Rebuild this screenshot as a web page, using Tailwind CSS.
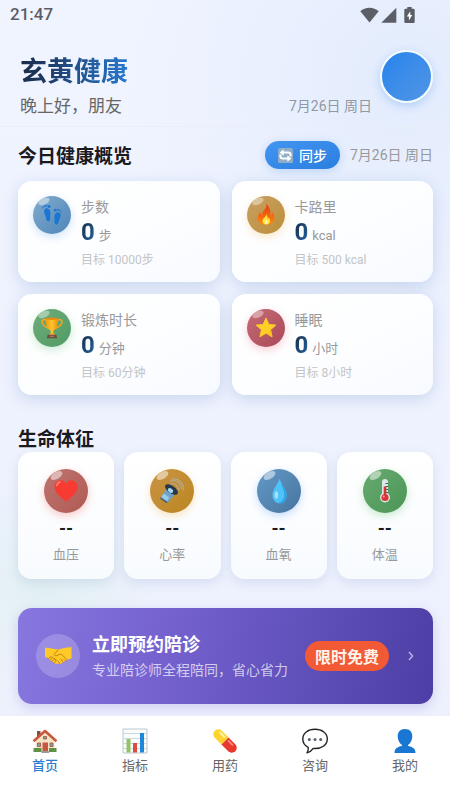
<!DOCTYPE html>
<html lang="zh-CN">
<head>
<meta charset="UTF-8">
<meta name="viewport" content="width=device-width, initial-scale=1">
<title>玄黄健康</title>
<script src="https://cdn.jsdelivr.net/npm/@tailwindcss/browser@4"></script>
</head>
<body class="min-h-screen flex flex-col font-['Roboto','Noto_Sans_CJK_SC',sans-serif] text-[#999999] bg-[#eef2fd] bg-[radial-gradient(circle_at_90%_10%,#e3ecfd_0%,transparent_34%),radial-gradient(circle_at_10%_73%,#e2f0f2_0%,transparent_16%),linear-gradient(180deg,#f0f4ff_0%,#edf1fd_100%)]">

<!-- Shared gradients -->
<svg class="absolute size-0" aria-hidden="true">
  <defs>
    <linearGradient id="flameG" x1="0" y1="0" x2="0" y2="1"><stop offset="0" stop-color="#e53917"/><stop offset="1" stop-color="#ff8a0d"/></linearGradient>
    <linearGradient id="goldG" x1="0" y1="0" x2="1" y2="0"><stop offset="0" stop-color="#f59b12"/><stop offset=".5" stop-color="#ffc52e"/><stop offset="1" stop-color="#ec8d0a"/></linearGradient>
  </defs>
</svg>

<div class="flex h-[30px] items-center justify-between pl-[10px] pr-[35px] text-[17px] font-medium text-[#5b5e66]">
  <span>21:47</span>
  <div class="flex items-center gap-[2px]">
    <svg class="h-4 w-[19px]" viewBox="0 0 19 16" fill="#5b5e66"><path d="M9.500 15.500 .3 4.200C2.800 1.900 6 .7 9.500.7s6.700 1.200 9.200 3.500z"/></svg>
    <svg class="size-4" viewBox="0 0 16 16" fill="#5b5e66"><path d="M15.300.7v15H.3z"/></svg>
    <svg class="ml-[5px] h-4 w-[11px]" viewBox="0 0 11 16"><path fill="#5b5e66" d="M3.300 0h4.400v1.700H9.500q1.200 0 1.200 1.200v11.800q0 1.200-1.200 1.200h-8Q.3 15.900.3 14.700V2.900q0-1.200 1.200-1.200h1.800z"/><path fill="#fff" d="M6.300 4.200v3.900h2L4.900 13.600V9.500H2.800z"/></svg>
  </div>
</div>

<header class="flex items-start border-b border-[#e9eef9] pt-5 pr-[17px] pb-1 pl-5">
  <div class="flex-1">
    <h1 class="w-fit bg-linear-to-r from-[#192a49] to-[#2678cf] bg-clip-text font-['Noto_Sans_CJK_SC',sans-serif] text-[27px] leading-[40px] font-bold text-transparent">玄黄健康</h1>
    <p class="text-[17px] leading-[32px] text-[#666666]">晚上好，朋友</p>
  </div>
  <time class="mr-2 self-end text-[14px] leading-[32px] text-[#9297a2]">7月26日 周日</time>
  <button type="button" aria-label="个人资料" class="size-[53px] rounded-full border-2 border-[#f3fcff] bg-linear-to-br from-[#2584ec] to-[#5095e5] shadow-[0_3px_10px_rgba(60,140,240,0.3)]"></button>
</header>

<main class="pr-[17px] pb-3 pl-[18px]">
  <section>
    <div class="flex items-center pt-[14px] pb-3">
      <h2 class="flex-1 font-['Noto_Sans_CJK_SC',sans-serif] text-[19px] leading-[28px] font-bold text-[#1a1a1f]">今日健康概览</h2>
      <button type="button" class="mr-[10px] flex h-[28px] items-center gap-[6px] rounded-full bg-linear-to-br from-[#4295f0] to-[#2a7edf] px-[13px] font-['Noto_Sans_CJK_SC',sans-serif] text-[14px] font-medium text-white shadow-[0_2px_8px_rgba(50,130,230,0.25)]">
        <svg class="size-[15px]" viewBox="0 0 16 16"><rect width="16" height="16" rx="2" fill="#8eadc6"/><path d="M2.600 9V7.200Q2.600 4.800 5 4.800h6.500M13.400 7v1.800q0 2.400-2.400 2.400H4.500" fill="none" stroke="#fff" stroke-width="2.200" transform="matrix(-1 0 0 1 16 0)"/><path fill="#fff" d="M6 1.300v7L1.700 4.800zM10 7.700v7l4.300-3.500z"/></svg>
        <span>同步</span>
      </button>
      <time class="text-[14px]">7月26日 周日</time>
    </div>

    <div class="grid grid-cols-2 gap-3">
      <article class="flex gap-[10px] rounded-[14px] bg-linear-to-br from-white via-[#fdfeff] to-[#f7faff] px-[15px] pt-[15px] pb-[11px] shadow-[0_4px_16px_rgba(80,125,185,0.24)]">
        <div class="size-[38px] shrink-0 rounded-full bg-linear-to-br from-[#83abcc] to-[#4d86b9] shadow-[0_3px_8px_rgba(60,140,230,0.25)]">
          <svg class="size-full" viewBox="0 0 38 38"><ellipse cx="11" cy="5.500" rx="6" ry="3" transform="rotate(-25 11 5.500)" fill="#fff" opacity=".45"/><g fill="#1976d2"><path d="M11.500 13.500c2-2.300 5-1 5.800 2.200.6 2.500-.4 3.900-.1 6 .3 2.600-.7 3.700-2 3.600-2-.1-1.900-2.600-2.500-4.700-.7-2.600-2.500-4.900-1.200-7.100zM27 17.200c-2.200-2-5-.4-5.500 2.500-.4 2.300.5 3.400.1 5.100-.5 2.500.5 3.700 1.800 3.700 2 .1 2-2.400 2.700-4.200.8-2.400 2.500-4.800.9-7.100z"/><circle cx="16" cy="10.500" r="1.500"/><circle cx="13.300" cy="9.800" r="1"/><circle cx="11.300" cy="10.300" r=".9"/><circle cx="9.800" cy="11.700" r=".8"/><circle cx="22.200" cy="14.200" r="1.400"/><circle cx="24.800" cy="13.700" r="1"/><circle cx="26.700" cy="14.400" r=".8"/><circle cx="28.200" cy="15.800" r=".7"/></g></svg>
        </div>
        <div>
          <h3 class="text-[14px] leading-[23px]">步数</h3>
          <p class="flex items-baseline gap-1 text-[13px] leading-[26px]"><strong class="bg-linear-to-br from-[#172b42] to-[#2169ae] bg-clip-text text-[24px] font-bold text-transparent">0</strong>步</p>
          <p class="text-[12px] leading-[22px] text-[#c3c4c8]">目标 10000步</p>
        </div>
      </article>
      <article class="flex gap-[10px] rounded-[14px] bg-linear-to-br from-white via-[#fdfeff] to-[#f7faff] px-[15px] pt-[15px] pb-[11px] shadow-[0_4px_16px_rgba(80,125,185,0.24)]">
        <div class="size-[38px] shrink-0 rounded-full bg-linear-to-br from-[#c7a062] to-[#bd8f38] shadow-[0_3px_8px_rgba(240,160,40,0.25)]">
          <svg class="size-full" viewBox="0 0 38 38"><ellipse cx="11" cy="5.500" rx="6" ry="3" transform="rotate(-25 11 5.500)" fill="#fff" opacity=".4"/><path fill="url(#flameG)" d="M19 8c1.200 3-.7 4.600-2.600 7-1.200 1.500-1.600 3-1.300 4.500-1.100-.6-1.700-2-1.500-3.500-2 2-3.100 4.400-2.800 7 .4 3.300 3.700 5.700 8.200 5.700s8-2.200 8.300-6c.2-2.700-1.200-5-2.300-6.700.1 1.800-.3 3-1.400 3.900.4-5-1.200-9.500-4.600-11.900z"/><path fill="#ffe341" d="M19 18.500c.7 2-3.500 3.500-3.500 6.500 0 2 1.600 3.400 3.700 3.400 2.300 0 3.900-1.400 3.900-3.500 0-1.500-.8-2.500-1.400-3.400-.2.900-.5 1.400-1 1.700.2-2-.3-3.600-1.700-4.700z"/><path fill="#fff7b8" d="M19.200 23.500c-1.700 1.400-2 4.300 0 4.400 2.200 0 1.900-2.700 0-4.400z"/></svg>
        </div>
        <div>
          <h3 class="text-[14px] leading-[23px]">卡路里</h3>
          <p class="flex items-baseline gap-1 text-[13px] leading-[26px]"><strong class="bg-linear-to-br from-[#172b42] to-[#2169ae] bg-clip-text text-[24px] font-bold text-transparent">0</strong>kcal</p>
          <p class="text-[12px] leading-[22px] text-[#c3c4c8]">目标 500 kcal</p>
        </div>
      </article>
      <article class="flex gap-[10px] rounded-[14px] bg-linear-to-br from-white via-[#fdfeff] to-[#f7faff] px-[15px] pt-[15px] pb-[11px] shadow-[0_4px_16px_rgba(80,125,185,0.24)]">
        <div class="size-[38px] shrink-0 rounded-full bg-linear-to-br from-[#6fad7b] to-[#4f9b65] shadow-[0_3px_8px_rgba(60,180,90,0.25)]">
          <svg class="size-full" viewBox="0 0 38 38"><ellipse cx="11" cy="5.500" rx="6" ry="3" transform="rotate(-25 11 5.500)" fill="#fff" opacity=".4"/><g fill="none" stroke="#f5a51e" stroke-width="1.600"><path d="M13.500 11.500c-2-1.700-4.800-1-4.500 1.500.3 3.200 3.200 5 6.500 6.500M24.500 11.500c2-1.700 4.800-1 4.500 1.500-.3 3.200-3.200 5-6.500 6.500"/></g><path fill="url(#goldG)" d="M12.800 9.500h12.400c0 6-1 10.500-4.800 12v4h-2.800v-4c-3.800-1.500-4.800-6-4.800-12z"/><ellipse cx="19" cy="9.700" rx="6.200" ry="1.300" fill="#e58a10"/><path fill="#f0a020" d="M16.300 24.500h5.400v1.500h-5.400z"/><path fill="#6d4c41" d="M14.700 25.700h8.600l.9 3.500H13.800z"/><path fill="#a87c5a" d="M16.700 26.700h4.600v1.200h-4.600z"/></svg>
        </div>
        <div>
          <h3 class="text-[14px] leading-[23px]">锻炼时长</h3>
          <p class="flex items-baseline gap-1 text-[13px] leading-[26px]"><strong class="bg-linear-to-br from-[#172b42] to-[#2169ae] bg-clip-text text-[24px] font-bold text-transparent">0</strong>分钟</p>
          <p class="text-[12px] leading-[22px] text-[#c3c4c8]">目标 60分钟</p>
        </div>
      </article>
      <article class="flex gap-[10px] rounded-[14px] bg-linear-to-br from-white via-[#fdfeff] to-[#f7faff] px-[15px] pt-[15px] pb-[11px] shadow-[0_4px_16px_rgba(80,125,185,0.24)]">
        <div class="size-[38px] shrink-0 rounded-full bg-linear-to-br from-[#c66d78] to-[#aa4757] shadow-[0_3px_8px_rgba(240,60,90,0.25)]">
          <svg class="size-full" viewBox="0 0 38 38"><ellipse cx="11" cy="5.500" rx="6" ry="3" transform="rotate(-25 11 5.500)" fill="#fff" opacity=".4"/><path fill="#ffcf28" stroke="#ffcf28" stroke-linejoin="round" d="m19 9 2.800 6.500 7 .6-5.300 4.700 1.600 7-6.100-3.700-6.100 3.700 1.600-7-5.300-4.700 7-.6z"/><path fill="#fdb515" d="m14 27.500 10-7 1 7.500-6-3.700z" opacity=".45"/></svg>
        </div>
        <div>
          <h3 class="text-[14px] leading-[23px]">睡眠</h3>
          <p class="flex items-baseline gap-1 text-[13px] leading-[26px]"><strong class="bg-linear-to-br from-[#172b42] to-[#2169ae] bg-clip-text text-[24px] font-bold text-transparent">0</strong>小时</p>
          <p class="text-[12px] leading-[22px] text-[#c3c4c8]">目标 8小时</p>
        </div>
      </article>
    </div>
  </section>

  <section class="pt-[29px]">
    <h2 class="font-['Noto_Sans_CJK_SC',sans-serif] text-[19px] leading-[28px] font-bold text-[#1a1a1f]">生命体征</h2>
    <div class="grid grid-cols-4 gap-[10px] text-center">
      <article class="flex flex-col items-center rounded-[14px] bg-linear-to-b from-white to-[#f8fbfe] pt-[17px] pb-3 shadow-[0_4px_12px_rgba(90,120,180,0.16)]">
        <div class="size-[44px] rounded-full bg-linear-to-br from-[#bd7470] to-[#b15a54] shadow-[0_3px_8px_rgba(240,70,60,0.28)]">
          <svg class="size-full" viewBox="0 0 44 44"><ellipse cx="12.500" cy="6.500" rx="6.500" ry="3.500" transform="rotate(-30 12.500 6.500)" fill="#fff" opacity=".5"/><path fill="#f83b32" d="M22 32.500C15.500 27.500 10.500 23 10.500 17.500c0-6.500 8.300-8.500 11.500-3 3.200-5.500 11.500-3.500 11.500 3C33.500 23 28.500 27.500 22 32.500z"/><path fill="none" stroke="#ff8378" stroke-width="1.500" stroke-linecap="round" d="M12.800 16.500c.4-2.200 1.600-3.300 3.300-3.600"/></svg>
        </div>
        <strong class="mt-[3px] text-[18px] leading-[26px] font-bold text-[#1a1a1f]">--</strong>
        <h3 class="mt-[1px] text-[13px] leading-[24px]">血压</h3>
      </article>
      <article class="flex flex-col items-center rounded-[14px] bg-linear-to-b from-white to-[#f8fbfe] pt-[17px] pb-3 shadow-[0_4px_12px_rgba(90,120,180,0.16)]">
        <div class="size-[44px] rounded-full bg-linear-to-br from-[#c99443] to-[#bc861f] shadow-[0_3px_8px_rgba(245,160,30,0.28)]">
          <svg class="size-full" viewBox="0 0 44 44"><ellipse cx="12.500" cy="6.500" rx="6.500" ry="3.500" transform="rotate(-30 12.500 6.500)" fill="#fff" opacity=".5"/><g fill="none" stroke="#b7a78c" stroke-width="1.200"><path d="M20 15.500c3-2.500 8.500.5 9 6"/><path d="M20 12.500c5-3 11.500 1.500 11.500 8"/><path d="M21 10.500c6-2.500 13 3 12.500 11"/></g><path fill="#6da4c8" d="m14 23.500 3-4.500 8 6-3.500 4-3.500 4.500-7.500-5z"/><path fill="#9ccbe6" d="m11.500 28 2.200-3.500 5.500 4-2.200 3.500z"/><ellipse cx="21.500" cy="20.500" rx="7.500" ry="3.700" transform="rotate(35 21.500 20.500)" fill="#263947"/><ellipse cx="20.500" cy="21.500" rx="3" ry="2" transform="rotate(35 20.500 21.500)" fill="#a7d7ed"/><path fill="#36566d" d="m10.500 28.500 7 4.700-1 .8-6.500-4.400z"/></svg>
        </div>
        <strong class="mt-[3px] text-[18px] leading-[26px] font-bold text-[#1a1a1f]">--</strong>
        <h3 class="mt-[1px] text-[13px] leading-[24px]">心率</h3>
      </article>
      <article class="flex flex-col items-center rounded-[14px] bg-linear-to-b from-white to-[#f8fbfe] pt-[17px] pb-3 shadow-[0_4px_12px_rgba(90,120,180,0.16)]">
        <div class="size-[44px] rounded-full bg-linear-to-br from-[#649bc7] to-[#47739f] shadow-[0_3px_8px_rgba(50,140,245,0.28)]">
          <svg class="size-full" viewBox="0 0 44 44"><ellipse cx="12.500" cy="6.500" rx="6.500" ry="3.500" transform="rotate(-30 12.500 6.500)" fill="#fff" opacity=".5"/><path fill="#4fc3f7" d="M22.500 9.500c1.300 5.500 7 10.500 7 16.500 0 5-3 8.300-7 8.300s-7-3.300-7-8.300c0-6 5.700-11 7-16.500z"/><path fill="#2aa7ec" d="M24 13c.5 5 3.500 8.500 3.300 13.500-.2 3.500-2.300 6-6.300 7.500 5 1 8.500-3 8.500-8 0-5-4-9-5.500-13z"/><ellipse cx="19.300" cy="26" rx="1.800" ry="3.700" fill="#a3e2fb"/></svg>
        </div>
        <strong class="mt-[3px] text-[18px] leading-[26px] font-bold text-[#1a1a1f]">--</strong>
        <h3 class="mt-[1px] text-[13px] leading-[24px]">血氧</h3>
      </article>
      <article class="flex flex-col items-center rounded-[14px] bg-linear-to-b from-white to-[#f8fbfe] pt-[17px] pb-3 shadow-[0_4px_12px_rgba(90,120,180,0.16)]">
        <div class="size-[44px] rounded-full bg-linear-to-br from-[#67a970] to-[#4b9656] shadow-[0_3px_8px_rgba(60,190,80,0.28)]">
          <svg class="size-full" viewBox="0 0 44 44"><ellipse cx="12.500" cy="6.500" rx="6.500" ry="3.500" transform="rotate(-30 12.500 6.500)" fill="#fff" opacity=".5"/><path fill="#dce7e9" d="M19 13a3 3 0 0 1 6 0v11.500a5 5 0 1 1-6 0z"/><circle cx="22" cy="28.500" r="3.600" fill="#d93636"/><path fill="#d93636" d="M20.700 17.500h2.600v9h-2.600z"/><g stroke="#455a64" stroke-width="1"><path d="M22.500 14.500H25M22.500 17.500H25M22.500 20.500H25M22.500 23.500H25"/></g><circle cx="20.700" cy="27.500" r="1" fill="#ff9a94"/></svg>
        </div>
        <strong class="mt-[3px] text-[18px] leading-[26px] font-bold text-[#1a1a1f]">--</strong>
        <h3 class="mt-[1px] text-[13px] leading-[24px]">体温</h3>
      </article>
    </div>
  </section>

  <a href="#booking" class="mt-[29px] flex items-center rounded-[14px] bg-[linear-gradient(100deg,#8777df_0%,#7562cf_35%,#6252bc_65%,#4c3ea4_100%)] px-[18px] py-[22px] font-['Noto_Sans_CJK_SC',sans-serif] shadow-[0_4px_12px_rgba(100,80,200,0.22)]">
    <span class="size-[44px] shrink-0 rounded-full bg-white/20">
      <svg class="size-full" viewBox="0 0 44 44"><path fill="#ffc928" d="m9 13.500 7 1 6 1 6-1.500 7.500-1v11.500l-4 1-7 4.500-2.500-.5-2 .5-3-2-3-2-2-2.500H9z"/><g fill="none" stroke="#c98212" stroke-width="1" stroke-linecap="round" stroke-linejoin="round"><path d="m31 25.500-6-5.500-3 1c-2 1.500-4.500.7-3.500-1L22 16M28 25.500l2 2M25 25l2.500 4M22 27l2 2.500M12.500 24.500l2.500-2 1.500 1-2.500 3M16.500 23.500l2 1-3 3.500M18.500 25l2 1-2.500 3.500"/></g></svg>
    </span>
    <span class="ml-3 flex flex-1 flex-col whitespace-nowrap">
      <strong class="text-[18px] leading-[26px] font-bold text-white">立即预约陪诊</strong>
      <span class="text-[14px] leading-[26px] text-white/70">专业陪诊师全程陪同，省心省力</span>
    </span>
    <span class="shrink-0 rounded-full bg-[#f15a35] px-[10px] text-[16px] leading-[30px] font-bold whitespace-nowrap text-[#fff3ec]">限时免费</span>
    <svg class="ml-[18px] h-3 w-2 shrink-0" viewBox="0 0 8 12" fill="none" stroke="#b9b0e2" stroke-width="1.500"><path d="m2 2 3.500 4L2 10"/></svg>
  </a>
</main>

<nav class="mt-auto grid h-[84px] grid-cols-5 bg-white pt-3 text-center text-[13px] leading-[20px] text-[#666666]">
  <a href="#home" aria-current="page" class="flex flex-col items-center gap-[2px] font-medium text-[#2d7dce]">
    <svg class="size-[26px]" viewBox="0 0 26 26"><path fill="#8b4a3b" d="M5 3h3.500v6H5z"/><path fill="#f4e3c5" d="M3.500 12 13 4l9.500 8v11.500h-19z"/><path fill="none" stroke="#c9583b" stroke-width="2.600" stroke-linejoin="round" d="M1.500 13.200 13 3l11.500 10.200"/><path fill="#c75642" d="M10.500 14.500h5.500v9h-5.500z"/><path fill="#7ba3b8" stroke="#a9502f" stroke-width=".8" d="M5.500 15h3v3.500h-3zM18 15h3v3.500h-3zM11.500 8.500h3V11h-3z"/><path fill="#5f9147" d="M1.500 20h8v4h-8zM17 20h7.500v4H17z"/><path fill="#9b9b93" d="M10 23h6.500l.8 2H9.300z"/></svg>
    <span>首页</span>
  </a>
  <a href="#metrics" class="flex flex-col items-center gap-[2px]">
    <svg class="size-[26px]" viewBox="0 0 26 26"><path fill="#fbfdfd" stroke="#b7c8cd" stroke-width="1" d="M1 1h24v24H1z"/><path stroke="#cad9dd" d="M1 5.500h24M1 10.500h24M1 15.500h24M1 20.500h24"/><path fill="#93c464" d="M4.500 11h4v13.500h-4z"/><path fill="#dd4b45" d="M11 15h4v9.500h-4z"/><path fill="#1e88d8" d="M18 5h4v19.500h-4z"/></svg>
    <span>指标</span>
  </a>
  <a href="#medicine" class="flex flex-col items-center gap-[2px]">
    <svg class="size-[26px]" viewBox="0 0 26 26"><g transform="rotate(45 13 13)"><path fill="#ffd32f" d="M13 8H3.500a5 5 0 0 0 0 10H13z"/><path fill="#e8392f" d="M13 8h9.500a5 5 0 0 1 0 10H13z"/><path stroke="#fff3a4" stroke-width="2" stroke-linecap="round" d="M3.500 10.500h6"/><path stroke="#ff9388" stroke-width="1.700" stroke-linecap="round" d="M15.500 10.500H21"/></g></svg>
    <span>用药</span>
  </a>
  <a href="#consult" class="flex flex-col items-center gap-[2px]">
    <svg class="size-[26px]" viewBox="0 0 26 26"><path fill="#fff" stroke="#242424" stroke-width="1.400" stroke-linejoin="round" d="M13 1.300c7 0 12.300 3.800 12.300 9.700S20 20.500 13 20.500l-1.800-.1c-1.500 2.300-3.500 3.800-6.200 4.500 1.200-1.700 1.600-3.500 1.200-5.600C2.800 17.700.8 15 .8 11 .8 5.100 6 1.300 13 1.300z"/><g fill="#58616a"><circle cx="7.300" cy="11.500" r="1.500"/><circle cx="13" cy="11.500" r="1.500"/><circle cx="18.700" cy="11.500" r="1.500"/></g></svg>
    <span>咨询</span>
  </a>
  <a href="#mine" class="flex flex-col items-center gap-[2px]">
    <svg class="size-[26px]" viewBox="0 0 26 26" fill="#1976d2"><path d="M13 1c5 0 7.300 3.200 7.300 7.300 0 3.400-1.600 7.200-4.300 8.700v1c4.500.8 7.500 2.500 7.500 7h-21c0-4.500 3-6.200 7.500-7v-1c-2.700-1.500-4.300-5.300-4.300-8.700C5.700 4.200 8 1 13 1z"/></svg>
    <span>我的</span>
  </a>
</nav>
</body>
</html>
